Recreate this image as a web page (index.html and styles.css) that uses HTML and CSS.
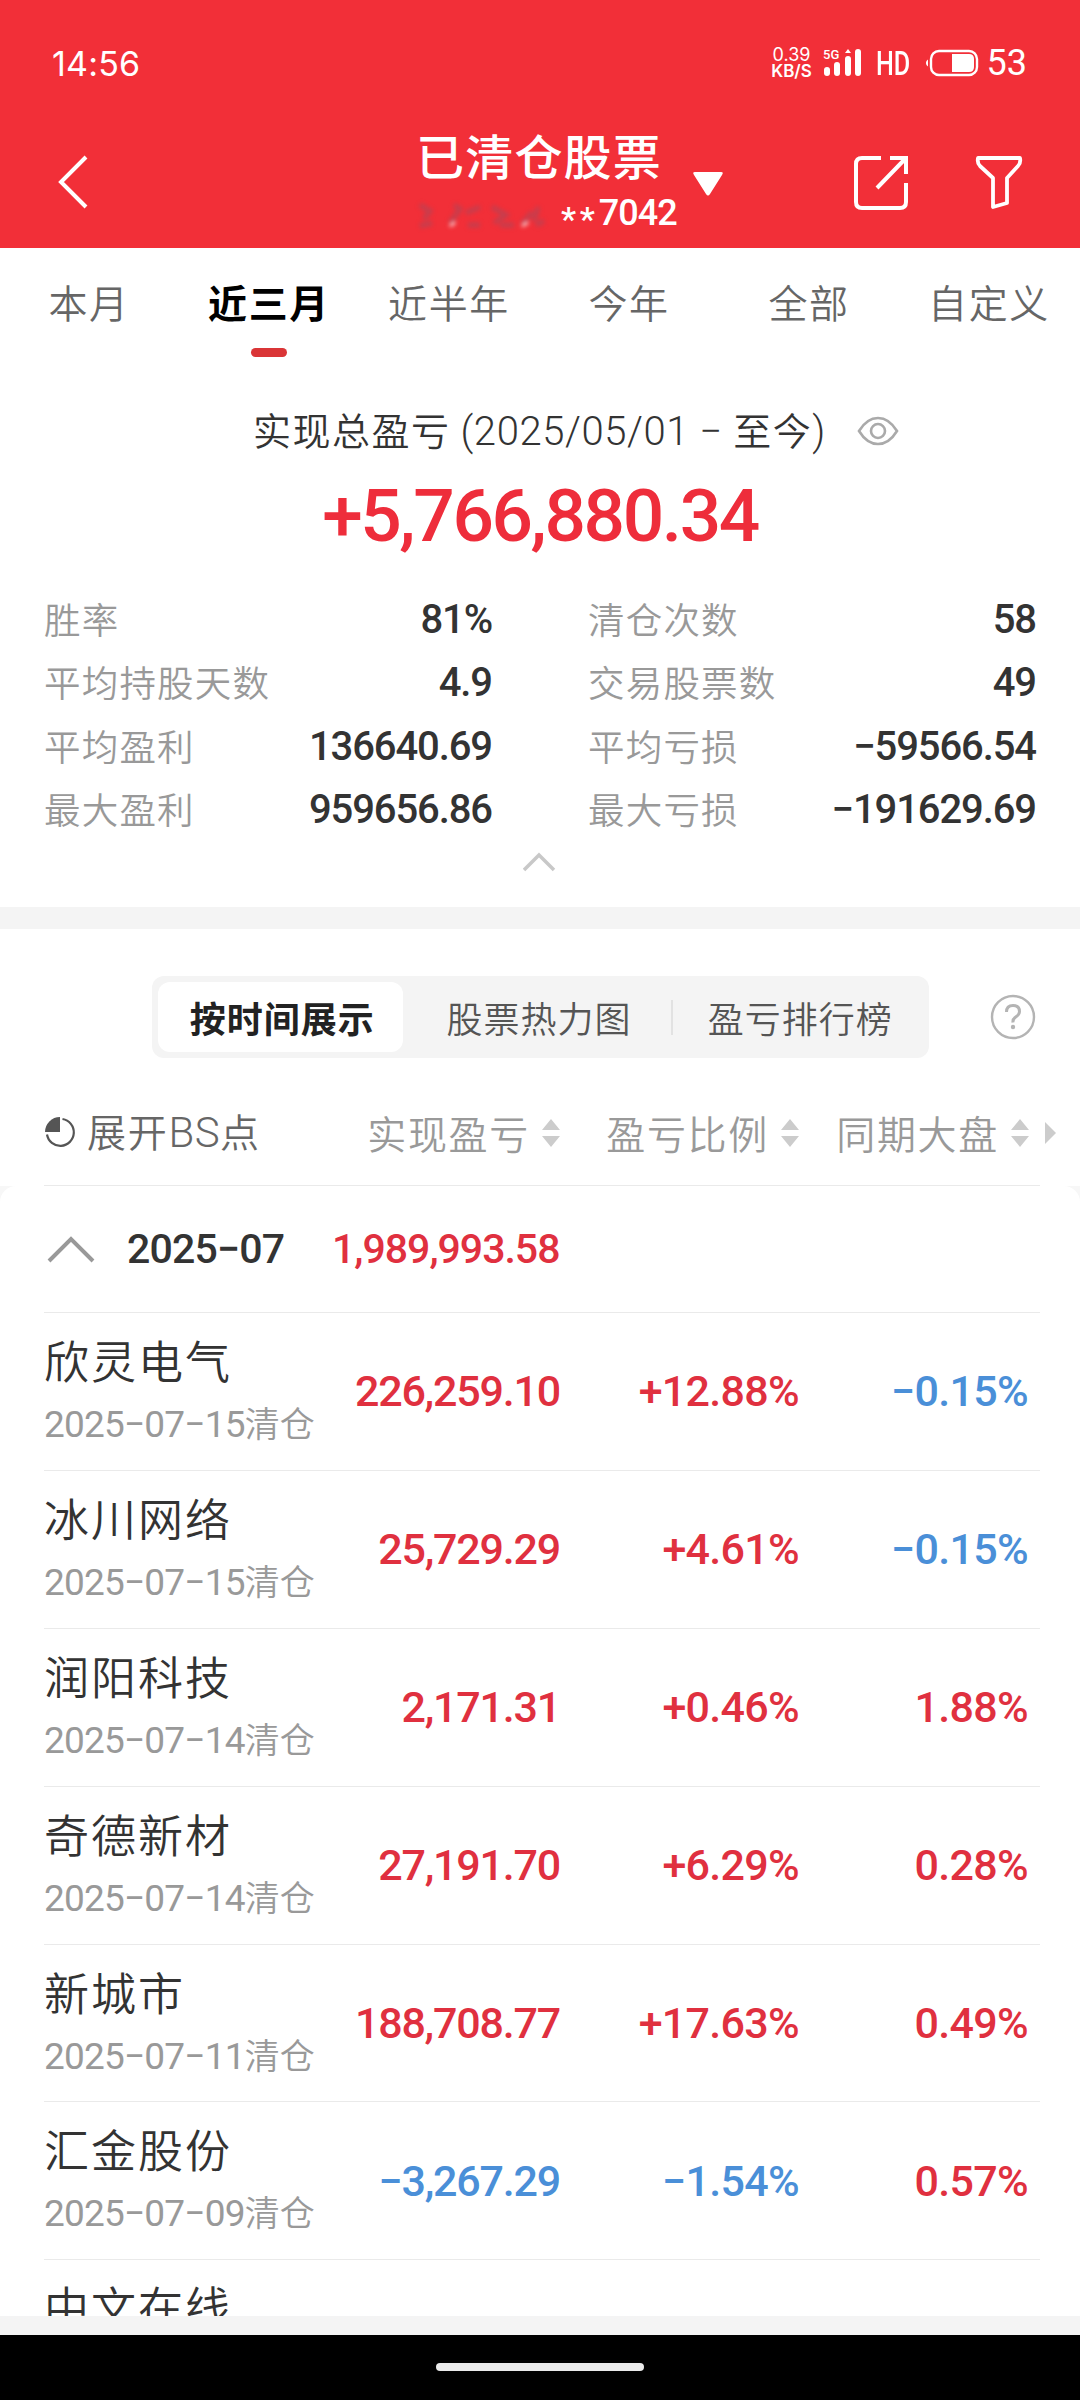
FILE: index.html
```
<!DOCTYPE html>
<html lang="zh-CN">
<head>
    <meta charset="UTF-8">
    <meta name="viewport" content="width=device-width, initial-scale=1.0">
    <title>已清仓股票</title>
    <link rel="stylesheet" href="styles.css">
</head>
<body>
    <header>
        <div class="status-bar">
            <span class="clock">14:56</span>
            <div class="net-speed"><span>0.39</span><b>KB/S</b></div>
            <svg class="signal" width="40" height="30" viewBox="0 0 40 30" fill="#fff">
                <text x="0" y="11" font-size="13" font-weight="500">5G</text>
                <rect x="1" y="19" width="6" height="9" rx="3"/>
                <rect x="11" y="14" width="6" height="14" rx="3"/>
                <rect x="22" y="8" width="6" height="20" rx="3"/>
                <path d="M22 5l3-4 3 4z"/>
                <rect x="32" y="1" width="6" height="27" rx="3"/>
            </svg>
            <span class="hd">HD</span>
            <svg class="battery" width="54" height="28" viewBox="0 0 54 28">
                <path d="M3 10.5v7a4 4 0 0 1 0-7z" fill="#fff"/>
                <rect x="6" y="2" width="46" height="24" rx="8" fill="none" stroke="#fff" stroke-width="2.4"/>
                <path d="M27 5h17q5 0 5 5v8q0 5-5 5H27z" fill="#fff"/>
            </svg>
            <span class="battery-level">53</span>
        </div>
        <div class="nav-bar">
            <svg class="back" width="34" height="56" viewBox="0 0 34 56">
                <path d="M30 3L5 28l25 25" fill="none" stroke="#fff" stroke-width="4"/>
            </svg>
            <div class="title">
                <h1>已清仓股票</h1>
                <div class="account">
                    <svg class="masked" width="136" height="40" viewBox="0 0 136 40">
                        <g fill="none" stroke="#a8485c" stroke-width="5" opacity="0.6">
                            <path d="M4 12l10 6-6 8M4 33l12-3M34 30l10-14-6-4M52 32h12M50 20l14-6"/>
                            <path d="M76 14l14 8-12 8M84 32h14M106 31l10-12M122 14l-4 14M120 32l8-4"/>
                        </g>
                        <path d="M34 33l5-4M106 33l6-4" stroke="#ffd0d0" stroke-width="3"/>
                    </svg>
                    <span class="stars">**</span><span>7042</span>
                </div>
            </div>
            <svg class="caret" width="30" height="24" viewBox="0 0 30 24">
                <path d="M2 0h26q3 0 1 3L17 22q-2 3-4 0L1 3q-2-3 1-3z" fill="#fff"/>
            </svg>
            <svg class="share" width="58" height="58" viewBox="0 0 58 58" fill="none" stroke="#fff" stroke-width="4">
                <path d="M28 4H9q-6 0-6 6v38q0 6 6 6h38q6 0 6-6V29"/>
                <path d="M37 4h16v16M53 4L24 34"/>
            </svg>
            <svg class="filter" width="50" height="58" viewBox="0 0 50 58">
                <path d="M4 4h42q1 5-2 8L33 24v25l-14 4V24L6 12Q3 9 4 4z" fill="none" stroke="#fff" stroke-width="3.8" stroke-linejoin="round"/>
            </svg>
        </div>
    </header>

    <nav class="tabs">
        <a>本月</a>
        <a class="active">近三月</a>
        <a>近半年</a>
        <a>今年</a>
        <a>全部</a>
        <a>自定义</a>
    </nav>

    <section class="summary">
        <div class="summary-title">
            <span>实现总盈亏 <i>(2025/05/01 − </i>至今<i>)</i></span>
            <svg width="42" height="30" viewBox="0 0 42 30" fill="none" stroke="#aaa" stroke-width="2.6">
                <path d="M2 15Q10 2 21 2t19 13Q32 28 21 28T2 15z"/>
                <circle cx="21" cy="15" r="7"/>
            </svg>
        </div>
        <div class="total">+5,766,880.34</div>
        <div class="stats">
            <dl>
                <div><dt>胜率</dt><dd>81%</dd></div>
                <div><dt>平均持股天数</dt><dd>4.9</dd></div>
                <div><dt>平均盈利</dt><dd>136640.69</dd></div>
                <div><dt>最大盈利</dt><dd>959656.86</dd></div>
            </dl>
            <dl>
                <div><dt>清仓次数</dt><dd>58</dd></div>
                <div><dt>交易股票数</dt><dd>49</dd></div>
                <div><dt>平均亏损</dt><dd>−59566.54</dd></div>
                <div><dt>最大亏损</dt><dd>−191629.69</dd></div>
            </dl>
        </div>
        <svg class="fold" width="34" height="20" viewBox="0 0 34 20">
            <path d="M1 18L16 3l15 15" fill="none" stroke="#c8c8c8" stroke-width="3.5"/>
        </svg>
    </section>

    <main>
        <div class="view-bar">
            <div class="segment">
                <button class="active">按时间展示</button>
                <button>股票热力图</button>
                <button class="split">盈亏排行榜</button>
            </div>
            <svg class="help" width="46" height="46" viewBox="0 0 46 46">
                <circle cx="23" cy="23" r="21" fill="none" stroke="#b4b4b4" stroke-width="2.4"/>
                <path d="M16.5 18q0-6.5 6.5-6.5t6.5 6q0 3-3.5 5.2T23 28.5" fill="none" stroke="#b4b4b4" stroke-width="3"/>
                <circle cx="23" cy="33" r="2.2" fill="#b4b4b4"/>
            </svg>
        </div>

        <div class="row table-head">
            <div class="expand">
                <svg width="32" height="32" viewBox="0 0 32 32">
                    <path d="M18.5 3A13.5 13.5 0 1 1 3 18.5" fill="none" stroke="#555" stroke-width="2.2"/>
                    <path d="M16 1v15H1A15 15 0 0 1 16 1z" fill="#555"/>
                </svg>
                <span>展开<i>BS</i>点</span>
            </div>
            <div class="sort">实现盈亏<svg width="18" height="28" viewBox="0 0 18 28"><path d="M9 0l9 11H0zM9 28l9-11H0z"/></svg></div>
            <div class="sort">盈亏比例<svg width="18" height="28" viewBox="0 0 18 28"><path d="M9 0l9 11H0zM9 28l9-11H0z"/></svg></div>
            <div class="sort">同期大盘<svg width="18" height="28" viewBox="0 0 18 28"><path d="M9 0l9 11H0zM9 28l9-11H0z"/></svg></div>
            <svg class="more" width="11" height="22" viewBox="0 0 11 22"><path d="M0 0l11 11L0 22z"/></svg>
        </div>

        <div class="card-back">
            <div class="card">
                <div class="month">
                    <svg width="50" height="28" viewBox="0 0 50 28">
                        <path d="M3 26L25 4l22 22" fill="none" stroke="#999" stroke-width="4"/>
                    </svg>
                    <span>2025−07</span>
                    <b class="up">1,989,993.58</b>
                </div>
                <div class="row stock">
                    <div class="name"><h2>欣灵电气</h2><p><i>2025−07−15</i>清仓</p></div>
                    <span class="up">226,259.10</span>
                    <span class="up">+12.88%</span>
                    <span class="down">−0.15%</span>
                </div>
                <div class="row stock">
                    <div class="name"><h2>冰川网络</h2><p><i>2025−07−15</i>清仓</p></div>
                    <span class="up">25,729.29</span>
                    <span class="up">+4.61%</span>
                    <span class="down">−0.15%</span>
                </div>
                <div class="row stock">
                    <div class="name"><h2>润阳科技</h2><p><i>2025−07−14</i>清仓</p></div>
                    <span class="up">2,171.31</span>
                    <span class="up">+0.46%</span>
                    <span class="up">1.88%</span>
                </div>
                <div class="row stock">
                    <div class="name"><h2>奇德新材</h2><p><i>2025−07−14</i>清仓</p></div>
                    <span class="up">27,191.70</span>
                    <span class="up">+6.29%</span>
                    <span class="up">0.28%</span>
                </div>
                <div class="row stock">
                    <div class="name"><h2>新城市</h2><p><i>2025−07−11</i>清仓</p></div>
                    <span class="up">188,708.77</span>
                    <span class="up">+17.63%</span>
                    <span class="up">0.49%</span>
                </div>
                <div class="row stock">
                    <div class="name"><h2>汇金股份</h2><p><i>2025−07−09</i>清仓</p></div>
                    <span class="down">−3,267.29</span>
                    <span class="down">−1.54%</span>
                    <span class="up">0.57%</span>
                </div>
                <div class="row stock">
                    <div class="name"><h2>中文在线</h2></div>
                </div>
            </div>
        </div>
    </main>

    <footer><div class="home-bar"></div></footer>
</body>
</html>
```
FILE: styles.css
```
:root {
  --red: #f22f38;
  --up: #e0303f;
  --down: #4a8fd8;
  --text: #333;
  --muted: #999;
  --gray: #f4f4f4;
  --num: Roboto, "Noto Sans CJK SC", sans-serif;
  --cjk: "Noto Sans CJK SC", sans-serif;
}
* {
  box-sizing: border-box;
}
body {
  margin: 0;
  height: 2400px;
  overflow: hidden;
  display: flex;
  flex-direction: column;
  font-family: var(--cjk);
  font-weight: 350;
  background: #fff;
  color: var(--text);
}
h1, h2, p, dl, dd {
  margin: 0;
}
i {
  font-style: normal;
  font-family: var(--num);
}
svg {
  display: block;
  flex: none;
}

/* Header */
header {
  height: 248px;
  flex: none;
  background: var(--red);
  color: #fff;
}
.status-bar {
  height: 126px;
  padding: 0 53px 0 52px;
  display: flex;
  align-items: center;
  font-family: Inter, sans-serif;
  font-weight: 400;
}
.clock {
  font-size: 34px;
  letter-spacing: 0.2px;
  margin-right: auto;
}
.net-speed {
  width: 42px;
  display: flex;
  flex-direction: column;
  align-items: center;
  font-size: 18px;
  line-height: 16px;
}
.net-speed b {
  font-size: 17px;
  font-weight: 600;
}
.signal {
  margin-left: 10px;
  font-family: Roboto, sans-serif;
}
.hd {
  width: 35px;
  margin-left: 13px;
  font: 500 34px/40px "Liberation Sans Narrow", Roboto, sans-serif;
  transform: scaleX(0.74);
  transform-origin: left;
}
.battery {
  margin-left: 14px;
}
.battery-level {
  margin-left: 8px;
  font: 400 36px/40px Roboto, sans-serif;
}
.nav-bar {
  height: 122px;
  padding: 0 56px;
  display: flex;
  align-items: flex-start;
}
.back {
  margin-top: 28px;
}
.title {
  width: 266px;
  margin-left: 326px;
}
h1 {
  margin-top: -3px;
  font-size: 48px;
  font-weight: 500;
  line-height: 62px;
  letter-spacing: 1.2px;
  white-space: nowrap;
}
.account {
  display: flex;
  height: 46px;
  margin-top: 5px;
  align-items: center;
  font: 500 36px/46px var(--num);
  letter-spacing: -1px;
}
.stars {
  position: relative;
  top: 6px;
  margin-left: 9px;
  font-size: 34px;
  letter-spacing: 3.8px;
}
.masked {
  filter: blur(2px);
}
.caret {
  margin: 46px 0 0 13px;
}
.share {
  margin: 28px 0 0 130px;
}
.filter {
  margin: 28px 0 0 63px;
}

/* Period tabs */
.tabs {
  display: flex;
  height: 122px;
  flex: none;
}
.tabs a {
  flex: 1;
  display: flex;
  flex-direction: column;
  align-items: center;
  padding: 24px 2px 0 0;
  font-size: 39px;
  line-height: 58px;
  letter-spacing: 1.6px;
  color: #666;
}
.tabs .active {
  font-weight: 700;
  color: #000;
}
.tabs .active::after {
  content: "";
  width: 36px;
  height: 9px;
  margin-top: 18px;
  border-radius: 4.5px;
  background: #da3537;
}

/* Totals */
.summary {
  height: 537px;
  flex: none;
}
.summary-title {
  display: flex;
  align-items: center;
  height: 60px;
  margin: 28px 0 0 253px;
  gap: 31px;
  font-size: 38px;
  letter-spacing: 1.5px;
  white-space: nowrap;
}
.summary-title svg {
  margin-top: 5px;
}
.summary-title i {
  font-size: 40px;
  letter-spacing: 0.6px;
}
.total {
  height: 86px;
  margin-top: 15px;
  text-align: center;
  font: 500 73px/86px var(--num);
  letter-spacing: -2.4px;
  color: #ee2d3b;
}
.stats {
  display: flex;
  gap: 96px;
  padding: 28px 44px 0;
}
.stats dl {
  flex: 1;
}
.stats dl div {
  display: flex;
  justify-content: space-between;
  align-items: center;
  height: 63.3px;
}
.stats dt {
  font-size: 36.5px;
  letter-spacing: 1.2px;
  color: var(--muted);
}
.stats dd {
  padding-top: 3px;
  font: 500 40px/60px var(--num);
  letter-spacing: -1.1px;
}
.fold {
  margin: 12px auto 0;
}

/* List */
main {
  height: 1409px;
  flex: none;
  overflow: hidden;
  border-top: 22px solid var(--gray);
}
.view-bar {
  display: flex;
  align-items: center;
  padding: 47px 44px 0 152px;
}
.segment {
  display: flex;
  align-items: center;
  width: 777px;
  height: 82px;
  padding: 6px;
  border-radius: 12px;
  background: var(--gray);
}
.segment button {
  height: 70px;
  width: 270px;
  padding: 0 0 0 4px;
  border: none;
  background: none;
  font: 350 36px/66px var(--cjk);
  letter-spacing: 1px;
  color: #555;
}
.segment .active {
  width: 246px;
  border-radius: 12px;
  background: #fff;
  font-weight: 700;
  color: #222;
}
.segment .split {
  width: 253px;
  height: 35px;
  line-height: 31px;
  border-left: 2px solid #e2e2e2;
}
.help {
  margin-left: auto;
}
.row {
  display: grid;
  grid-template-columns: 277px 239px 239px 229px;
  align-items: center;
  margin: 0 40px 0 44px;
}
.table-head {
  grid-template-columns: 277px 239px 239px 230px 11px;
  height: 128px;
  padding-top: 20px;
  border-bottom: 1px solid #eaeaea;
}
.table-head .more {
  margin: 2px 0 0 16px;
  fill: #ccc;
}
.expand, .sort {
  display: flex;
  align-items: center;
  font-size: 39px;
  line-height: 58px;
  letter-spacing: 1.7px;
  white-space: nowrap;
}
.expand {
  gap: 11px;
  color: #666;
}
.expand i {
  font-size: 42px;
  letter-spacing: 0.5px;
}
.sort {
  justify-content: flex-end;
  gap: 12px;
  color: var(--muted);
}
.sort svg {
  margin-top: 2px;
  fill: #ccc;
}
.card-back {
  background: #f7f7f7;
}
.card {
  border-radius: 16px 16px 0 0;
  background: #fff;
}
.month {
  display: flex;
  align-items: center;
  height: 127px;
  margin: 0 40px 0 44px;
  padding-left: 2px;
  border-bottom: 1px solid #eaeaea;
  font: 500 41px/60px var(--num);
  letter-spacing: -0.8px;
}
.month span {
  margin-left: 31px;
  width: 205px;
}
.month b {
  font-weight: 500;
  letter-spacing: -1px;
}
.stock {
  height: 157.9px;
  border-bottom: 1px solid #eaeaea;
}
.stock > span {
  text-align: right;
  font: 500 43px/60px var(--num);
  letter-spacing: -1.2px;
}
.stock > span + span {
  letter-spacing: -0.7px;
}
.name {
  white-space: nowrap;
}
h2 {
  font-size: 45px;
  font-weight: 350;
  line-height: 64px;
  letter-spacing: 2px;
}
.name p {
  font-size: 35px;
  line-height: 60px;
  color: var(--muted);
}
.name i {
  font-size: 37px;
  font-weight: 400;
  letter-spacing: -0.8px;
}
.stock:last-child {
  align-items: start;
  padding-top: 14px;
}
.up {
  color: var(--up);
}
.down {
  color: var(--down);
}

/* Gesture bar */
footer {
  flex: none;
  height: 84px;
  border-top: 19px solid var(--gray);
  background: #000;
}
.home-bar {
  width: 208px;
  height: 8px;
  margin: 28px auto 0;
  border-radius: 4px;
  background: #ebebeb;
}
```
